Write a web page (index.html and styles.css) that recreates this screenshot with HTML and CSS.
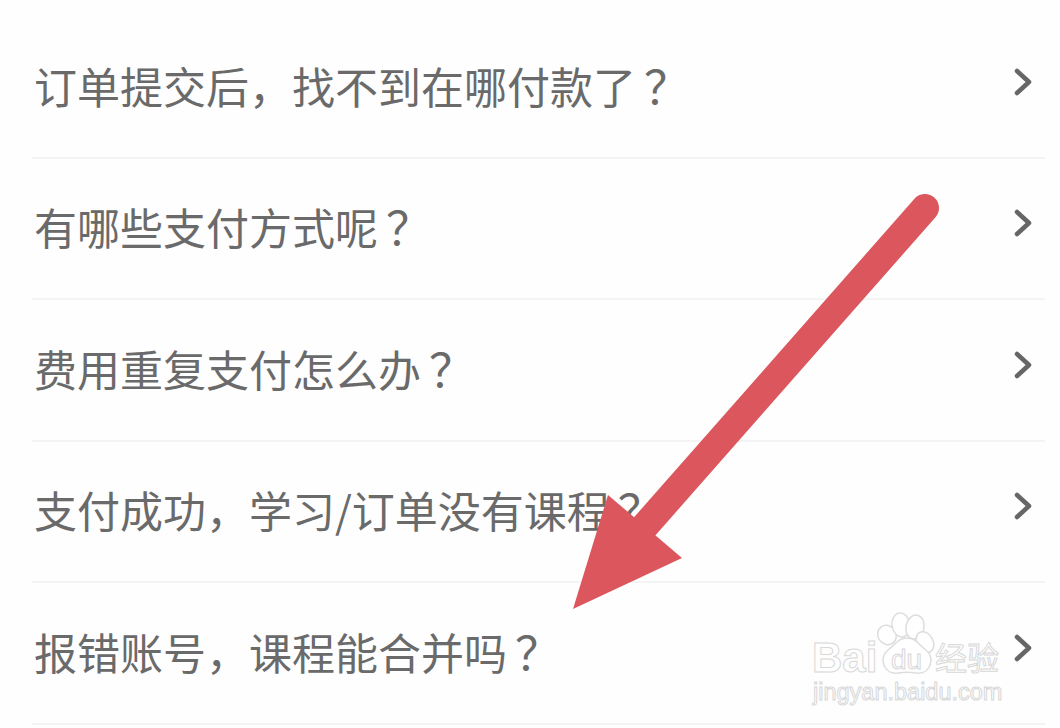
FILE: index.html
```html
<!DOCTYPE html>
<html lang="zh">
<head>
<meta charset="utf-8"/>
<title>常见问题</title>
<link rel="stylesheet" href="styles.css">
</head>
<body>
<ul class="faq">
	<li class="faq-row"><span class="faq-text">订单提交后，找不到在哪付款了<span class="qm">？</span></span><svg class="chevron" viewBox="0 0 18 28"><path d="M3 3L15 14L3 25"/></svg></li>
	<li class="faq-row"><span class="faq-text">有哪些支付方式呢<span class="qm">？</span></span><svg class="chevron" viewBox="0 0 18 28"><path d="M3 3L15 14L3 25"/></svg></li>
	<li class="faq-row"><span class="faq-text">费用重复支付怎么办<span class="qm">？</span></span><svg class="chevron" viewBox="0 0 18 28"><path d="M3 3L15 14L3 25"/></svg></li>
	<li class="faq-row"><span class="faq-text">支付成功，学习/订单没有课程<span class="qm">？</span></span><svg class="chevron" viewBox="0 0 18 28"><path d="M3 3L15 14L3 25"/></svg></li>
	<li class="faq-row"><span class="faq-text">报错账号，课程能合并吗<span class="qm">？</span></span><svg class="chevron" viewBox="0 0 18 28"><path d="M3 3L15 14L3 25"/></svg></li>
</ul>

<!-- 红色箭头标注 -->
<svg class="mark" viewBox="0 0 1060 728">
	<path class="mark-shaft" d="M925 208L645 526"/>
	<path class="mark-head" d="M608 495L682 558L573 609Z"/>
</svg>

<!-- 水印 -->
<svg class="watermark" viewBox="0 0 1060 728">
	<g class="wm-paw">
		<ellipse cx="887" cy="635" rx="9" ry="10" transform="rotate(-35 887 635)"/>
		<ellipse cx="901" cy="625" rx="9" ry="12" transform="rotate(-8 901 625)"/>
		<ellipse cx="915" cy="627" rx="9" ry="12" transform="rotate(12 915 627)"/>
		<ellipse cx="925" cy="642" rx="8" ry="11" transform="rotate(-30 925 642)"/>
		<path d="M907 638C916 638 919 645 926 650C936 658 930 675 916 673C910 672 904 672 898 673C884 675 878 658 888 650C895 645 898 638 907 638Z"/>
	</g>
	<text class="wm-text wm-bai" x="812" y="672">Bai</text>
	<text class="wm-text wm-du" x="891" y="669">du</text>
	<text class="wm-text wm-cn" x="935" y="670">经验</text>
	<text class="wm-text wm-url" x="813" y="700">jingyan.baidu.com</text>
</svg>
</body>
</html>
```

FILE: styles.css
```css
html,body{margin:0;padding:0;}
body{width:1060px;height:728px;overflow:hidden;position:relative;background-color:#fefefe;font-family:"Liberation Sans","Noto Sans CJK SC",sans-serif;color:#6a6a6a;}
.faq{list-style:none;margin:0 15px 0 32px;padding:17px 0 0;}
.faq-row{display:flex;align-items:center;justify-content:space-between;height:139.5px;border-bottom:#f4f4f4 2px solid;padding:0 13px 0 2px;}
.faq-text{font-size:43px;line-height:60px;margin-top:-4px;font-family:"Noto Sans CJK SC",sans-serif;}
.qm{font-size:46px;line-height:46px;margin-left:8px;}
.chevron{width:18px;height:28px;margin-top:-10px;fill:none;stroke:#666;stroke-width:4.5;stroke-linecap:round;stroke-linejoin:round;}
.mark,.watermark{position:absolute;left:0;top:0;width:1060px;height:728px;}
.mark-shaft{fill:none;stroke:#dc565d;stroke-width:28;stroke-linecap:round;}
.mark-head{fill:#dc565d;}
.wm-paw{fill:#fff;stroke:#ddd;stroke-width:1.5;}
.wm-text{fill:#fff;stroke:#d8d8d8;stroke-width:1;}
.wm-bai{font-size:42px;font-weight:bold;}
.wm-du{font-size:28px;}
.wm-cn{font-size:32px;font-family:"Noto Sans CJK SC",sans-serif;}
.wm-url{font-size:23.5px;}
```
